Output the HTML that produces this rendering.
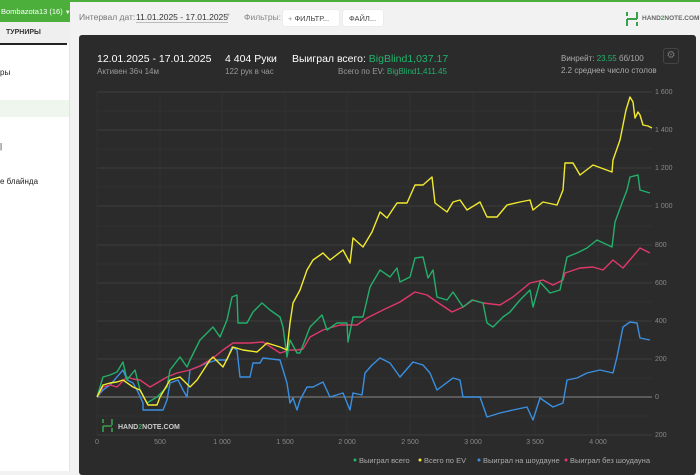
<!DOCTYPE html>
<html><head><meta charset="utf-8"><style>
*{margin:0;padding:0;box-sizing:border-box}
body{width:700px;height:471px;overflow:hidden;background:#f2f2f2;font-family:"Liberation Sans",sans-serif;position:relative}
.abs{position:absolute;white-space:nowrap}
</style></head><body>
<div class="abs" style="left:0;top:0;width:700px;height:2px;background:#4caf3c"></div>
<div class="abs" style="left:0;top:0;width:70px;height:471px;background:#fff;border-right:1px solid #e4e4e4"></div>
<div class="abs" style="left:0;top:0;width:70px;height:22px;background:#4caf3c;color:#fff;font-size:7.5px;padding:7px 0 0 1px;overflow:hidden">Bombazota13 (16) <span style="font-size:6px">▼</span></div>
<div class="abs" style="left:0;top:22px;width:70px;height:21px;background:#efefef;font-size:7px;font-weight:bold;color:#333;padding:7px 0 0 6px">ТУРНИРЫ</div>
<div class="abs" style="left:0;top:43px;width:67px;height:2px;background:#222"></div>
<div class="abs" style="left:0;top:68px;font-size:8px;color:#222">ры</div>
<div class="abs" style="left:0;top:100px;width:69px;height:17px;background:#eef6ee"></div>
<div class="abs" style="left:0;top:142px;font-size:8px;color:#222">|</div>
<div class="abs" style="left:0;top:177px;font-size:8px;color:#222">е блайнда</div>

<div class="abs" style="left:79px;top:12px;font-size:8.5px;color:#777">Интервал дат:</div>
<div class="abs" style="left:136px;top:12px;font-size:8.5px;color:#333;border-bottom:1px solid #bbb">11.01.2025 - 17.01.2025</div>
<div class="abs" style="left:225px;top:13px;font-size:6px;color:#aaa">▼</div>
<div class="abs" style="left:244px;top:12px;font-size:8.5px;color:#888">Фильтры:</div>
<div class="abs" style="left:283px;top:10px;width:56px;height:16px;background:#fff;border-radius:2px;font-size:7.5px;color:#444;padding:4px 0 0 5px;box-shadow:0 0 1px #ccc"><span style="color:#999">+</span> ФИЛЬТР...</div>
<div class="abs" style="left:343px;top:10px;width:40px;height:16px;background:#fff;border-radius:2px;font-size:7.5px;color:#444;padding:4px 0 0 6px;box-shadow:0 0 1px #ccc">ФАЙЛ...</div>
<svg class="abs" style="left:625px;top:12px" width="14" height="14"><path d="M2 0v4M2 7v7M12 0v7M12 10v4M2 7h10" stroke="#3aa14a" stroke-width="2" fill="none"/></svg>
<div class="abs" style="left:642px;top:15px;font-size:6.5px;font-weight:bold;color:#666">HAND<span style="color:#3aa14a">2</span>NOTE.COM</div>

<div class="abs" style="left:79px;top:35px;width:617px;height:440px;background:#2b2b2b;border-radius:3px"></div>
<div class="abs" style="left:97px;top:53px;font-size:10.5px;color:#fff">12.01.2025 - 17.01.2025</div>
<div class="abs" style="left:97px;top:67px;font-size:8px;color:#999">Активен 36ч 14м</div>
<div class="abs" style="left:225px;top:53px;font-size:10.5px;color:#fff">4 404 Руки</div>
<div class="abs" style="left:225px;top:67px;font-size:8px;color:#999">122 рук в час</div>
<div class="abs" style="left:292px;top:53px;font-size:10.5px;color:#fff">Выиграл всего: <span style="color:#21b36b">BigBlind1,037.17</span></div>
<div class="abs" style="left:338px;top:67px;font-size:8px;color:#999">Всего по EV: <span style="color:#21b36b">BigBlind1,411.45</span></div>
<div class="abs" style="left:561px;top:54px;font-size:8px;color:#aaa">Винрейт: <span style="color:#21b36b">23.55</span> бб/100</div>
<div class="abs" style="left:561px;top:66px;font-size:8px;color:#aaa">2.2 среднее число столов</div>
<div class="abs" style="left:663px;top:48px;width:16px;height:16px;border:1px solid #444;border-radius:3px;color:#777;font-size:10px;text-align:center;line-height:14px">⚙</div>

<svg class="abs" style="left:0;top:0" width="700" height="471">
<g stroke="#313131" stroke-width="1">
<path d="M97 111H652M97 149H652M97 187H652M97 226H652M97 264H652M97 302H652M97 340H652M97 378H652M97 416H652"/>
<path d="M97 92V435M160 92V435M222 92V435M285 92V435M347 92V435M410 92V435M473 92V435M535 92V435M598 92V435"/>
</g>
<g stroke="#3c3c3c" stroke-width="1">
<path d="M97 92H652M97 130H652M97 168H652M97 206H652M97 245H652M97 283H652M97 321H652M97 359H652M97 435H652"/>
</g>
<path d="M97 397H652" stroke="#777" stroke-width="1.2"/>
<g fill="none" stroke-width="1.4" stroke-linejoin="round">
<polyline stroke="#3a8fe0" points="97,397 103,390 110,385 123,370 127,380 133,383 138,392 143,403 143,410 163,410 167,400 170,383 178,380 183,390 187,397 190,370 200,366 207,363 217,360 227,360 232,347 237,350 240,377 250,377 253,363 260,363 263,358 280,360 287,383 290,403 293,398 297,410 300,400 307,387 313,387 323,382 330,397 343,393 350,410 353,393 362,395 365,373 372,365 380,358 390,363 400,377 413,362 423,365 430,373 437,390 453,378 460,380 463,397 480,397 487,417 500,413 513,410 527,407 533,420 540,398 553,407 563,403 567,380 577,378 587,373 600,370 613,373 617,357 623,327 630,322 637,323 640,338 650,340"/>
<polyline stroke="#e0386a" points="97,397 103,387 110,385 117,387 127,377 133,379 140,380 150,387 157,383 167,377 177,373 190,370 200,366 213,358 223,350 233,343 250,343 263,342 280,353 290,350 297,350 303,349 310,337 323,330 340,325 357,325 367,318 383,310 400,302 415,292 427,295 437,302 452,312 463,307 473,300 483,303 500,305 513,297 530,283 543,280 553,285 563,280 565,273 580,268 593,267 603,270 613,260 623,268 640,248 650,253"/>
<polyline stroke="#22b06a" points="97,397 103,377 110,375 117,372 123,362 127,380 135,370 140,390 147,403 157,397 167,387 170,370 180,357 187,367 190,360 200,340 213,327 220,337 227,320 232,297 237,295 238,323 247,323 253,312 262,303 270,310 280,317 283,327 287,357 290,340 297,353 300,353 310,327 322,315 327,330 337,323 347,323 348,342 353,317 363,317 370,287 380,270 390,277 397,268 400,282 410,277 415,258 423,257 428,278 433,270 437,297 447,300 453,292 463,307 472,300 483,303 487,323 493,327 503,317 510,312 520,300 530,290 533,307 540,282 550,293 560,290 567,257 577,253 587,248 597,240 612,247 615,222 622,203 627,190 630,177 638,175 640,190 650,193"/>
<polyline stroke="#f2ea2f" points="97,397 103,385 110,383 117,382 123,380 133,387 140,390 148,405 157,405 160,397 170,380 180,377 190,387 197,380 210,360 213,357 223,367 233,347 243,350 257,352 267,343 280,347 287,350 290,323 293,303 300,290 307,270 313,260 323,253 330,260 343,250 350,263 353,238 363,247 372,232 380,212 387,218 397,203 407,203 415,185 423,185 432,177 435,203 447,212 453,202 460,200 467,210 480,202 487,217 497,217 507,205 520,202 530,200 533,210 543,202 557,205 563,190 565,163 573,163 580,175 593,165 612,172 613,160 620,140 626,110 630,97 633,102 635,118 638,112 640,115 643,125 648,126 652,128"/>
</g>
<g font-family="Liberation Sans" font-size="7" fill="#888">
<text x="655" y="94">1 600</text><text x="655" y="132">1 400</text><text x="655" y="170">1 200</text><text x="655" y="208">1 000</text><text x="655" y="247">800</text><text x="655" y="285">600</text><text x="655" y="323">400</text><text x="655" y="361">200</text><text x="655" y="399">0</text><text x="655" y="437">200</text>
<g text-anchor="middle"><text x="97" y="444">0</text><text x="160" y="444">500</text><text x="222" y="444">1 000</text><text x="285" y="444">1 500</text><text x="347" y="444">2 000</text><text x="410" y="444">2 500</text><text x="473" y="444">3 000</text><text x="535" y="444">3 500</text><text x="598" y="444">4 000</text></g>
</g>
<path d="M103 419v4M103 426v6M112 419v6M112 428v4M103 426h9" stroke="#3aa14a" stroke-width="1.6" fill="none"/>
<text x="118" y="429" font-family="Liberation Sans" font-size="7" font-weight="bold" fill="#ccc">HAND<tspan fill="#3aa14a">2</tspan>NOTE.COM</text>
<g font-family="Liberation Sans" font-size="7.5" fill="#aaa">
<circle cx="355" cy="460" r="1.5" fill="#22b06a"/><text x="359" y="463">Выиграл всего</text>
<circle cx="420" cy="460" r="1.5" fill="#f2ea2f"/><text x="424" y="463">Всего по EV</text>
<circle cx="479" cy="460" r="1.5" fill="#3a8fe0"/><text x="483" y="463">Выиграл на шоудауне</text>
<circle cx="566" cy="460" r="1.5" fill="#e0386a"/><text x="570" y="463">Выиграл без шоудауна</text>
</g>
</svg>
</body></html>
